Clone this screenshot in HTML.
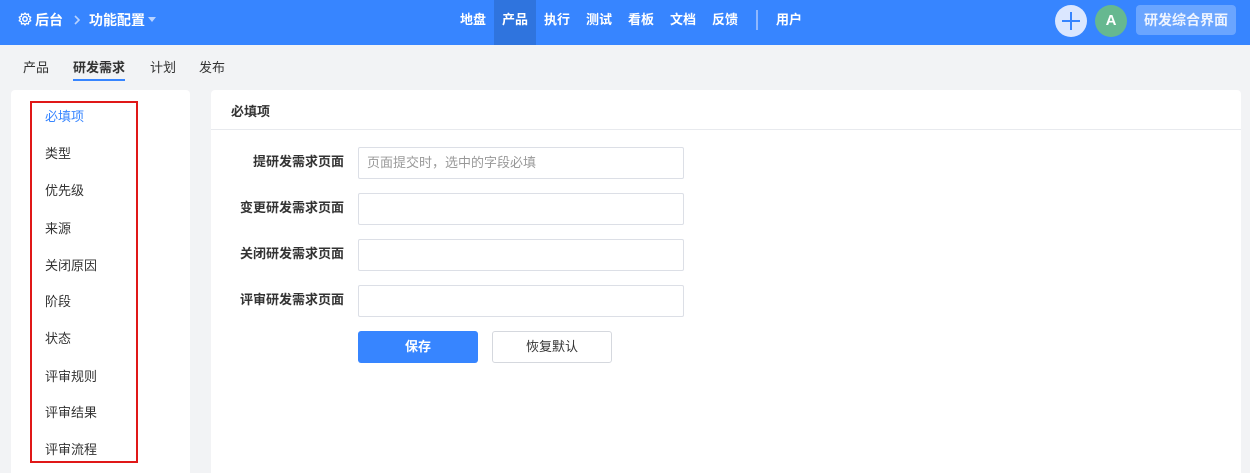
<!DOCTYPE html>
<html><head><meta charset="utf-8"><style>
*{box-sizing:border-box;margin:0;padding:0}
body{width:1250px;height:473px;overflow:hidden;background:#f2f3f5;font-family:"Liberation Sans","Noto Sans CJK SC",sans-serif;font-size:13px;color:#333;position:relative}
.hd{position:absolute;left:0;top:0;width:1250px;height:45px;background:#3785ff;color:#fff;font-weight:bold;font-size:13px}
.a{position:absolute;top:0;line-height:40px;font-size:14px}
.nav span{position:absolute;top:0;line-height:40px;height:45px;text-align:center}
.tabs span{position:absolute;top:57px;font-size:13px;color:#333}
.lp{position:absolute;left:11px;top:90px;width:179px;height:383px;background:#fff;border-radius:4px 4px 0 0}
.rb{position:absolute;left:30px;top:101px;width:108px;height:362px;border:2px solid #e01818}
.li{position:absolute;left:45px;font-size:13px;color:#333}
.rp{position:absolute;left:211px;top:90px;width:1030px;height:383px;background:#fff;border-radius:4px 4px 0 0}
.lbl{position:absolute;right:906px;font-weight:bold;font-size:13px;color:#333;line-height:32px}
.in{position:absolute;left:358px;width:326px;height:32px;border:1px solid #dcdfe6;border-radius:2px;font-size:13px;color:#999;line-height:30px;padding-left:8px}
</style></head><body>
<div class="hd">
<svg style="position:absolute;left:18px;top:12px" width="14" height="14" viewBox="0 0 14 14"><circle cx="7" cy="7" r="2.2" fill="none" stroke="#fff" stroke-width="1.5"/><path d="M7 1 L8.2 2.6 L10.5 2 L10.6 4.3 L12.8 5.2 L11.6 7 L12.8 8.8 L10.6 9.7 L10.5 12 L8.2 11.4 L7 13 L5.8 11.4 L3.5 12 L3.4 9.7 L1.2 8.8 L2.4 7 L1.2 5.2 L3.4 4.3 L3.5 2 L5.8 2.6Z" fill="none" stroke="#fff" stroke-width="1.3" stroke-linejoin="round"/></svg>
<span class="a" style="left:35px">后台</span>
<svg style="position:absolute;left:73px;top:15px" width="8" height="10" viewBox="0 0 8 10"><path d="M2 1 L6 5 L2 9" fill="none" stroke="#b9d3ff" stroke-width="1.6"/></svg>
<span class="a" style="left:89px">功能配置</span>
<span style="position:absolute;left:148px;top:17px;border:4px solid transparent;border-top:5px solid #b9d3ff"></span>
<div class="nav">
<span style="left:452px;width:42px">地盘</span>
<span style="left:494px;width:42px;background:#2f74de">产品</span>
<span style="left:536px;width:42px">执行</span>
<span style="left:578px;width:42px">测试</span>
<span style="left:620px;width:42px">看板</span>
<span style="left:662px;width:42px">文档</span>
<span style="left:704px;width:42px">反馈</span>
<span style="left:756px;top:10px;width:2px;height:20px;background:#8fb8ff"></span>
<span style="left:768px;width:42px">用户</span>
</div>
<div style="position:absolute;left:1055px;top:5px;width:32px;height:32px;border-radius:50%;background:#dbe7ff"></div>
<div style="position:absolute;left:1062px;top:20px;width:18px;height:2px;background:#3785ff"></div>
<div style="position:absolute;left:1070px;top:12px;width:2px;height:18px;background:#3785ff"></div>
<div style="position:absolute;left:1095px;top:5px;width:32px;height:32px;border-radius:50%;background:#66b890;text-align:center;line-height:32px;font-size:15px">A</div>
<div style="position:absolute;left:1136px;top:5px;width:100px;height:30px;border-radius:4px;background:#6aa5ff;text-align:center;line-height:30px;font-size:14px;color:#eef4ff">研发综合界面</div>
</div>
<div class="tabs">
<span style="left:23px">产品</span>
<span style="left:73px;font-weight:bold">研发需求</span>
<span style="left:150px">计划</span>
<span style="left:199px">发布</span>
</div>
<div style="position:absolute;left:73px;top:79px;width:52px;height:2px;background:#3785ff"></div>
<div class="lp"></div>
<div class="rb"></div>
<div class="li" style="top:106px;color:#3785ff">必填项</div>
<div class="li" style="top:143px">类型</div>
<div class="li" style="top:180px">优先级</div>
<div class="li" style="top:218px">来源</div>
<div class="li" style="top:255px">关闭原因</div>
<div class="li" style="top:291px">阶段</div>
<div class="li" style="top:328px">状态</div>
<div class="li" style="top:366px">评审规则</div>
<div class="li" style="top:402px">评审结果</div>
<div class="li" style="top:439px">评审流程</div>
<div class="rp"></div>
<div style="position:absolute;left:231px;top:101px;font-weight:bold">必填项</div>
<div style="position:absolute;left:211px;top:129px;width:1030px;height:1px;background:#e8eaee"></div>
<div class="lbl" style="top:146px">提研发需求页面</div>
<div class="lbl" style="top:192px">变更研发需求页面</div>
<div class="lbl" style="top:238px">关闭研发需求页面</div>
<div class="lbl" style="top:284px">评审研发需求页面</div>
<div class="in" style="top:147px">页面提交时，选中的字段必填</div>
<div class="in" style="top:193px"></div>
<div class="in" style="top:239px"></div>
<div class="in" style="top:285px"></div>
<div style="position:absolute;left:358px;top:331px;width:120px;height:32px;background:#3785ff;border-radius:3px;color:#fff;font-weight:bold;text-align:center;line-height:32px">保存</div>
<div style="position:absolute;left:492px;top:331px;width:120px;height:32px;border:1px solid #d5d8de;border-radius:3px;text-align:center;line-height:30px;color:#333">恢复默认</div>
</body></html>
